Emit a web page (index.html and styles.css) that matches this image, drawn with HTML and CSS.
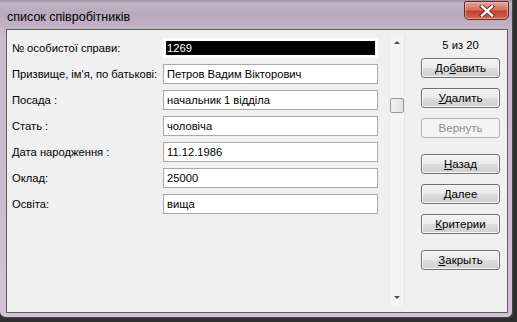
FILE: index.html
```html
<!DOCTYPE html>
<html lang="uk">
<head>
    <meta charset="UTF-8">
    <title>список співробітників</title>
    <link rel="stylesheet" href="styles.css">
</head>
<body>
    <div class="window">
        <div class="titlebar">
            <span class="title">список співробітників</span>
            <div class="close-btn">
                <svg width="16" height="12" viewBox="0 0 16 12">
                    <path d="M3 1.5 L13 10.5 M13 1.5 L3 10.5" stroke="#5a2a22" stroke-width="4.2" stroke-linecap="square"/>
                    <path d="M3 1.5 L13 10.5 M13 1.5 L3 10.5" stroke="#fff" stroke-width="2.4" stroke-linecap="square"/>
                </svg>
            </div>
        </div>
        <div class="client">
            <div class="form">
                <div class="row">
                    <label>№ особистої справи:</label>
                    <div class="field active"><span>1269</span></div>
                </div>
                <div class="row">
                    <label>Призвище, ім'я, по батькові:</label>
                    <div class="field">Петров Вадим Вікторович</div>
                </div>
                <div class="row">
                    <label>Посада :</label>
                    <div class="field">начальник 1 відділа</div>
                </div>
                <div class="row">
                    <label>Стать :</label>
                    <div class="field">чоловіча</div>
                </div>
                <div class="row">
                    <label>Дата народження :</label>
                    <div class="field">11.12.1986</div>
                </div>
                <div class="row">
                    <label>Оклад:</label>
                    <div class="field">25000</div>
                </div>
                <div class="row">
                    <label>Освіта:</label>
                    <div class="field">вища</div>
                </div>
            </div>
            <div class="scrollbar">
                <span class="arrow up"></span>
                <span class="thumb"></span>
                <span class="arrow down"></span>
            </div>
            <div class="actions">
                <div class="counter">5 из 20</div>
                <button>До<u>б</u>авить</button>
                <button><u>У</u>далить</button>
                <button class="disabled">Вернуть</button>
                <button class="sep"><u>Н</u>азад</button>
                <button><u>Д</u>алее</button>
                <button><u>К</u>ритерии</button>
                <button class="sep"><u>З</u>акрыть</button>
            </div>
        </div>
    </div>
</body>
</html>
```

FILE: styles.css
```css
body {
    margin: 0;
    background-color: #2e2e2e;
    font-family: 'Liberation Sans', Arial, sans-serif;
    font-size: 11.2px;
    color: #000;
}
.window {
    width: 513px;
    height: 318px;
    box-sizing: border-box;
    background: linear-gradient(180deg, #b9abbd 0%, #c9bccd 12%, #cbbccf 60%, #d3c2d6 100%);
    border-radius: 0 0 6px 6px;
    border-right: 1px solid #4a4450;
    border-bottom: 1px solid #4a4450;
    display: flex;
    flex-direction: column;
}
.titlebar {
    height: 29px;
    display: flex;
    align-items: flex-start;
    justify-content: space-between;
    padding-left: 7px;
    background: linear-gradient(180deg, #9a909e 0px, #c0b3c4 3px, #b7a8bb 14px, #c4b6c8 29px);
}
.title {
    font-size: 12.5px;
    color: #000;
    margin-top: 10px;
}
.close-btn {
    width: 45px;
    height: 19px;
    margin: 1px 3px 0 0;
    box-sizing: border-box;
    border: 1px solid #5b2a24;
    border-radius: 2px 2px 5px 5px;
    background: linear-gradient(180deg, #e6a598 0%, #d4705e 45%, #c0402b 55%, #d06a52 100%);
    box-shadow: inset 0 0 0 1px rgba(255, 210, 200, 0.5);
    display: flex;
    align-items: center;
    justify-content: center;
}
.client {
    margin-left: 6px;
    width: 502px;
    height: 284px;
    box-sizing: border-box;
    border: 1px solid #5d5d5d;
    background-color: #f0f0f0;
    display: flex;
}
.form {
    padding: 8px 0 0 5px;
    display: flex;
    flex-direction: column;
    gap: 6px;
}
.row {
    display: flex;
    align-items: center;
    height: 20px;
}
.row label {
    width: 151px;
}
.field {
    width: 215px;
    height: 20px;
    box-sizing: border-box;
    border: 1px solid #a9a9a9;
    background-color: #fff;
    padding: 2px 3px;
    line-height: 15px;
    white-space: nowrap;
}
.field.active {
    border-color: #fff;
    padding: 2px;
}
.field.active span {
    display: block;
    height: 14px;
    line-height: 14px;
    background-color: #000;
    color: #fff;
    padding-left: 1px;
}
.scrollbar {
    margin: 6px 0 0 11px;
    width: 16px;
    height: 270px;
    box-sizing: border-box;
    background-color: #f4f4f4;
    border-left: 1px solid #ebebeb;
    border-right: 1px solid #e6e6e6;
    display: flex;
    flex-direction: column;
    align-items: center;
}
.arrow {
    width: 0;
    height: 0;
    border-left: 3px solid transparent;
    border-right: 3px solid transparent;
}
.arrow.up {
    margin-top: 5px;
    border-bottom: 3px solid #4d4d4d;
}
.arrow.down {
    margin-top: auto;
    margin-bottom: 7px;
    border-top: 3px solid #4d4d4d;
}
.thumb {
    margin-top: 54px;
    width: 14px;
    height: 15px;
    box-sizing: border-box;
    border: 1px solid #979797;
    border-radius: 2px;
    background: linear-gradient(90deg, #f3f3f3, #e2e2e2);
}
.actions {
    margin-left: 16px;
    width: 79px;
    padding-top: 8px;
    display: flex;
    flex-direction: column;
    gap: 10px;
}
.counter {
    text-align: center;
    height: 14px;
    line-height: 14px;
    margin-bottom: -4px;
}
.actions button {
    height: 20px;
    padding: 0;
    font-family: 'Liberation Sans', Arial, sans-serif;
    font-size: 11.5px;
    color: #000;
    border: 1px solid #707070;
    border-radius: 3px;
    background: linear-gradient(180deg, #f2f2f2 0%, #ebebeb 50%, #dddddd 51%, #cfcfcf 100%);
    box-shadow: inset 0 0 0 1px #fbfbfb;
}
.actions button.disabled {
    color: #8d8d8d;
    border-color: #adb2b5;
    background: #f4f4f4;
    box-shadow: none;
}
.actions button.sep {
    margin-top: 6px;
}
```
